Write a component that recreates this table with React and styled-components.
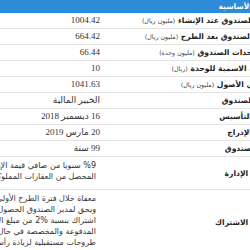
import React from "react";
import styled, { createGlobalStyle } from "styled-components";

const GlobalStyle = createGlobalStyle`
  html, body {
    margin: 0;
    padding: 0;
    background: #ffffff;
    overflow: hidden;
  }
`;

const Viewport = styled.div`
  width: 250px;
  height: 250px;
  overflow: hidden;
`;

const Sheet = styled.div`
  direction: rtl;
  width: 580px;
  margin-left: -280px;
  font-family: "Liberation Serif", "DejaVu Sans", serif;
  color: #333;
`;

const Header = styled.div`
  height: 13px;
  line-height: 13px;
  background-color: #2d8bd7;
  color: #fff;
  font-family: "DejaVu Sans", sans-serif;
  font-size: 7.5px;
  font-weight: bold;
  padding-right: 18px;
  overflow: hidden;
`;

const Table = styled.table`
  width: 100%;
  border-collapse: collapse;
  table-layout: fixed;
`;

const Row = styled.tr`
  border-bottom: 1px solid #e4e4e4;
`;

const Label = styled.td`
  width: 163px;
  padding: 0 27px 0 4px;
  text-align: right;
  vertical-align: middle;
  font-family: "DejaVu Sans", sans-serif;
  font-size: 7.6px;
  font-weight: bold;
  white-space: nowrap;
  color: #222;
`;

const Unit = styled.span`
  font-weight: normal;
  font-size: 6.3px;
  color: #444;
`;

const Value = styled.td`
  padding: ${(p) => (p.$multi ? "3px 10px 7px 0" : "0 6px 0 0")};
  text-align: right;
  vertical-align: middle;
  font-size: 9px;
  white-space: nowrap;
`;

const Cell = styled.div`
  height: 11px;
  line-height: 11px;
  padding: 2px 0;
`;

const Line = styled.div`
  height: 11px;
  line-height: 11px;
  font-family: "DejaVu Sans", sans-serif;
  font-size: 8px;
`;

const rows = [
  { label: "حجم الصندوق عند الإنشاء", unit: "(مليون ريال)", value: "1004.42" },
  { label: "قيمة الصندوق بعد الطرح", unit: "(مليون ريال)", value: "664.42" },
  { label: "عدد وحدات الصندوق", unit: "(مليون وحدة)", value: "66.44" },
  { label: "القيمة الاسمية للوحدة", unit: "(ريال)", value: "10" },
  { label: "إجمالي الأصول", unit: "(مليون ريال)", value: "1041.63" },
  { label: "مدير الصندوق", value: "الخبير المالية" },
  { label: "تاريخ التأسيس", value: "16 ديسمبر 2018" },
  { label: "تاريخ الإدراج", value: "20 مارس 2019" },
  { label: "مدة الصندوق", value: "99 سنة" },
  {
    label: "رسوم الإدارة",
    lines: [
      "%9 سنويا من صافي قيمة الإيجار السنوي",
      "المحصل من العقارات المملوكة للصندوق",
    ],
  },
  {
    label: "رسوم الاشتراك",
    lines: [
      "معفاة خلال فترة الطرح الأولي الصندوق",
      "ويحق لمدير الصندوق الحصول على رسوم",
      "اشتراك بنسبة %2 من مبلغ الاشتراك",
      "المدفوعة والمخصصة في حال أي",
      "طروحات مستقبلية لزيادة رأس المال",
    ],
  },
];

export default function App() {
  return (
    <Viewport>
      <GlobalStyle />
      <Sheet>
        <Header>البيانات الأساسية</Header>
        <Table>
          <tbody>
            {rows.map((r) => (
              <Row key={r.label}>
                <Label>
                  {r.lines ? (
                    r.label
                  ) : (
                    <Cell>
                      {r.label} {r.unit && <Unit>{r.unit}</Unit>}
                    </Cell>
                  )}
                </Label>
                {r.lines ? (
                  <Value $multi>
                    {r.lines.map((l) => (
                      <Line key={l}>{l}</Line>
                    ))}
                  </Value>
                ) : (
                  <Value>
                    <Cell>{r.value}</Cell>
                  </Value>
                )}
              </Row>
            ))}
          </tbody>
        </Table>
      </Sheet>
    </Viewport>
  );
}
